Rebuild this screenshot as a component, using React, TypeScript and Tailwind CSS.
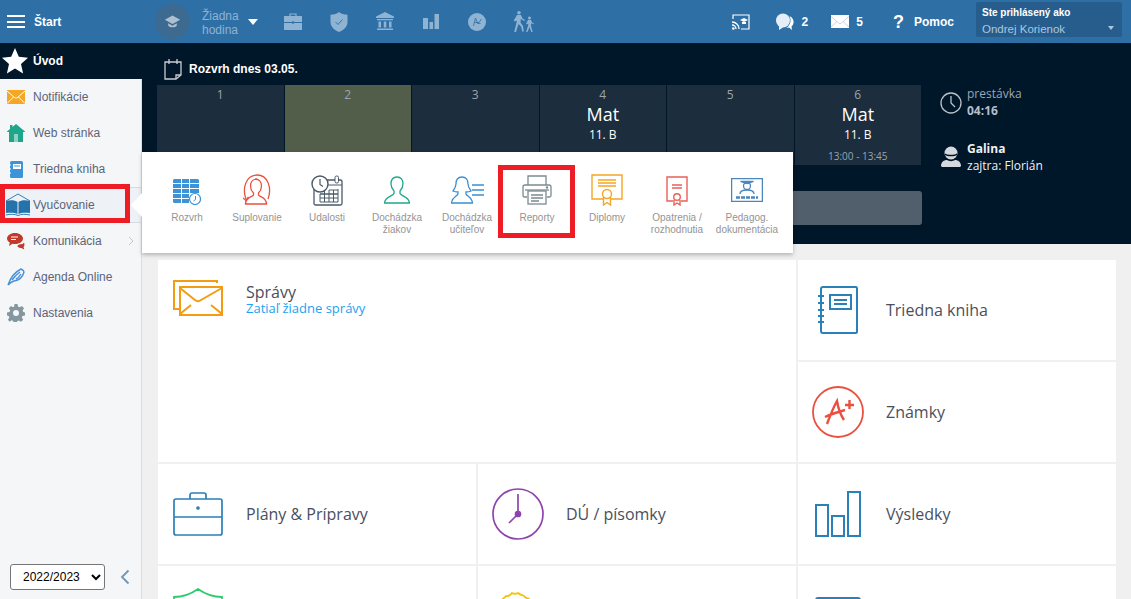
import React from "react";

const S = (p: React.SVGProps<SVGSVGElement>) => <svg fill="none" {...p} />;

const HeaderIcons = {
  Cap: () => (
    <S viewBox="0 0 20 20" className="w-[17px] h-[17px]">
      <path d="M10 3 19 8l-9 5-9-5z" fill="#aebfd0" />
      <path d="M5 12v3c2 2.500 8 2.500 10 0v-3l-5 3z" fill="#aebfd0" />
    </S>
  ),
  Brief: () => (
    <S viewBox="0 0 18 17" className="w-[18px] h-[17px]">
      <path d="M6 3V1h6v2" stroke="#8fb3d3" strokeWidth="1.200" />
      <path d="M0 3h18v6H0zM0 10h18v7H0z" fill="#8fb3d3" />
      <circle cx="9" cy="9.500" r="1.200" fill="#2e6fa6" />
    </S>
  ),
  Shield: () => (
    <S viewBox="0 0 18 20" className="w-[18px] h-[20px]">
      <path d="M9 0c2 1.800 5 2.700 8.500 2.700V10c0 4.500-3.500 8-8.500 10-5-2-8.500-5.500-8.500-10V2.700C4 2.700 7 1.800 9 0z" fill="#8fb3d3" />
      <path d="m5.500 10 2.500 2.500 4.500-5" stroke="#2e6fa6" strokeWidth="0.900" />
    </S>
  ),
  Bank: () => (
    <S viewBox="0 0 18 19" className="w-[18px] h-[19px]">
      <path d="M9 0 18 4.500V6H0V4.500zM1 7h16v1.300H1zM2.500 9.500h2.500v6H2.500zM7.800 9.500h2.500v6H7.800zM13 9.500h2.500v6H13zM1 16.500h16V18H1z" fill="#8fb3d3" />
    </S>
  ),
  Bars: () => (
    <S viewBox="0 0 16 15" className="w-[16px] h-[15px]">
      <path d="M0 4h5v11H0zM6.500 8h3.500v7H6.500zM11.500 0H16v15h-4.500z" fill="#8fb3d3" />
    </S>
  ),
  Ball: () => (
    <S viewBox="0 0 18 18" className="w-[18px] h-[18px]">
      <circle cx="9" cy="9" r="9" fill="#8fb3d3" />
      <path d="M5.500 13 7.500 5l2.500 6 3.500-5M6.500 9l6 1.500" stroke="#2e6fa6" strokeWidth="0.800" />
    </S>
  ),
  Hike: () => (
    <S viewBox="0 0 21 21" className="w-[21px] h-[21px]" fill="#8fb3d3">
      <circle cx="6" cy="1.800" r="1.800" />
      <path d="M4 4h4l1.500 3.500 2.500 1.500-.5 1-3-1.500-.6-1-.4 4 2.500 3.500.8 5.500h-1.600l-1-4.800L5.500 13l-2.500 8H1.200L3.800 10.500l-.3-1L2 10.500 0.700 9.500z" />
      <circle cx="16.500" cy="7" r="1.500" />
      <path d="M15 9h3l1 2.500 2 1-.4.8-2.300-1-.4 2.200 1.800 6.500h-1.400l-1.800-5-2 5h-1.400l2.200-7-.1-1.500-1.400 1-.7-.8z" />
    </S>
  ),
};

const Star = () => (
  <S viewBox="0 0 26 26" className="w-[26px] h-[26px]">
    <path d="M13 0l3.800 8.800 9.200.9-7 6.200 2.100 9.500L13 20.500 4.900 25.400 7 15.900 0 9.700l9.200-.9z" fill="#fff" />
  </S>
);

const sideIcons: Record<string, React.ReactNode> = {
  mail: (
    <S viewBox="0 0 18 14" className="w-[18px] h-[14px]">
      <rect width="18" height="14" fill="#f5a623" />
      <path d="M0 1l7.500 6.500c1 .8 2 .8 3 0L18 1M0 13.500l6.500-6.500M18 13.500 11.500 7" stroke="#fff" strokeWidth="1" />
    </S>
  ),
  home: (
    <S viewBox="0 0 18 18" className="w-[18px] h-[18px]">
      <path d="M9 0 18 7.500V8h-2v10H2V8H0v-.5L3 5V1h2.500v2z" fill="#1fa589" />
      <rect x="7" y="10" width="4" height="8" fill="#fff" opacity=".5" />
    </S>
  ),
  book: (
    <S viewBox="0 0 14 17" className="w-[14px] h-[17px]">
      <rect x="1" width="13" height="17" rx="1.500" fill="#3c93d8" />
      <rect x="4" y="3" width="8" height="5" fill="#fff" />
      <path d="M5 5h6" stroke="#3c93d8" />
      <path d="M0 4h2M0 8h2M0 12h2" stroke="#fff" />
    </S>
  ),
  openbook: (
    <S viewBox="0 0 26 26" className="w-[26px] h-[26px]">
      <path d="M1 9 13 2l12 7" stroke="#2e80bd" strokeWidth="1" />
      <path d="M1 9c4-1 9-1 11.500 1v12C10 20.500 5 20.500 1 21zM25 9c-4-1-9-1-11.500 1v12c2.500-1.500 7.500-1.500 11.500-1z" fill="#2473ab" />
      <path d="M1 23c4-1 9-1 12 .5 3-1.500 8-1.500 12-.5" stroke="#2e80bd" strokeWidth="1" />
    </S>
  ),
  chat: (
    <S viewBox="0 0 18 17" className="w-[18px] h-[17px]">
      <path d="M8 0c4.500 0 8 2.500 8 5.500S12.500 11 8 11c-1 0-1.700 0-2.500-.3L2 13l.8-3.500C1 8.500 0 7 0 5.500 0 2.500 3.500 0 8 0z" fill="#c0392b" />
      <path d="M4 4h7M4 6.500h5" stroke="#fff" />
      <path d="M12 11.500c3 0 4.500-1 5-2 .8 2 .5 3.500-.5 4.500l.8 2.500-3-1.500c-1.500 0-3.300-.5-4-2z" fill="#c0392b" />
    </S>
  ),
  pen: (
    <S viewBox="0 0 18 18" className="w-[18px] h-[18px]" stroke="#4a90d9" strokeWidth="1.400">
      <path d="M1 17C3 11 6 5 14 1c2 1 3 2 3 3-1 4-4 8-10 9-2 .4-4 2-6 4z" />
      <path d="M5 12c2-3 4-5 8-8M9 11c2-1 3.500-2.500 5-5" />
    </S>
  ),
  gear: (
    <S viewBox="0 0 18 18" className="w-[18px] h-[18px]">
      <path d="M7.500 0h3l.5 2.500 1.600.7L14.800 2 17 4.200l-1.400 2.200.7 1.600 1.700.5v3l-2.500.5-.7 1.600 1.400 2.200-2.200 2-2.200-1.300-1.600.7-.5 2.300h-3l-.5-2.500-1.600-.7-2.200 1.400L1 15.600l1.400-2.200L1.700 12 0 11.500v-3L2.500 8l.7-1.600L1.800 4.200 4 2l2.200 1.300 1-.7z" fill="#84969f" />
      <circle cx="9" cy="9" r="3" fill="#f5f6f8" />
    </S>
  ),
};

const sideItems = [
  { k: "mail", t: "Notifikácie" },
  { k: "home", t: "Web stránka" },
  { k: "book", t: "Triedna kniha" },
  { k: "openbook", t: "Vyučovanie", active: true },
  { k: "chat", t: "Komunikácia", arrow: true },
  { k: "pen", t: "Agenda Online" },
  { k: "gear", t: "Nastavenia" },
];

const popIcons = {
  rozvrh: (
    <S viewBox="0 0 28 26" className="w-[28px] h-[26px] mt-[4px]">
      <path d="M0 1.500A1.500 1.500 0 0 1 1.500 0H8v4H0zM9 0h7v4H9zM17 0h7.500A1.500 1.500 0 0 1 26 1.500V4h-9zM0 5h8v4H0zM9 5h7v4H9zM17 5h9v4h-9zM0 10h8v4H0zM9 10h7v4H9zM17 10h9v4h-9zM0 15h8v4H0zM9 15h7v4H9zM0 20h8v4H1.500A1.500 1.500 0 0 1 0 22.500zM9 20h7v4H9z" fill="#3c93d8" />
      <circle cx="22" cy="20" r="5.500" fill="#fff" stroke="#3c93d8" strokeWidth="1.200" />
      <path d="M22.500 17v3.500l-2 1.500" stroke="#3c93d8" />
    </S>
  ),
  supl: (
    <S viewBox="0 0 28 32" className="w-[28px] h-[32px]" stroke="#e9503f" strokeWidth="1.300">
      <path d="M3 25C-1 14 3 1 14 1s15 13 11 24" />
      <path d="M14 5c-4 0-6.500 3-6.500 7 0 3 1.500 5.500 3 7v2c-1 2-8 2-8 9h21c0-7-7-7-8-9v-2c1.500-1.500 3-4 3-7 0-4-2.500-7-6.500-7z" fill="#fff" />
      <path d="M0 24l3 2.500L5.500 23" />
    </S>
  ),
  udal: (
    <S viewBox="0 0 32 31" className="w-[32px] h-[31px]">
      <rect x="3" y="5" width="28" height="25" rx="1.500" fill="#fff" stroke="#4b5a6b" strokeWidth="1.300" />
      <path d="M3 10h28" stroke="#4b5a6b" />
      <rect x="24" y="1" width="3.500" height="7" rx="1.500" fill="#fff" stroke="#4b5a6b" />
      <path d="M9 27v-8h18v-5M9 19h18v8H9M13.500 15v12M18 15v12M22.500 15v12M9 23h18M18 15h9" stroke="#4b5a6b" />
      <circle cx="9" cy="9" r="8" fill="#fff" stroke="#4b5a6b" strokeWidth="1.400" />
      <path d="M9 4v5.500l3 2" stroke="#4b5a6b" strokeWidth="1.200" />
    </S>
  ),
  dz: (
    <S viewBox="0 0 26 28" className="w-[26px] h-[28px]" stroke="#1ea88a" strokeWidth="1.300">
      <path d="M13 1c-4 0-6 3-6 7 0 3 1.200 5 3 7v2.500c-1 2.500-9 3-9.500 9.500h25c-.5-6.500-8.500-7-9.500-9.500V15c1.800-2 3-4 3-7 0-4-2-7-6-7z" />
    </S>
  ),
  du: (
    <S viewBox="0 0 33 28" className="w-[33px] h-[28px]" stroke="#3c8fd0" strokeWidth="1.300">
      <path d="M11 1c-4 0-6 3-6 7 0 2.500-1.500 5-3 7 1 .5 3 1 5 1v2c-1 2.500-6 3-6.500 9h21c-.5-6-5.500-6.500-6.500-9v-2c2 0 4-.5 5-1-1.500-2-3-4.500-3-7 0-4-2-7-6-7z" />
      <path d="M21 9h12M21 14h12M21 19h12" />
    </S>
  ),
  print: (
    <S viewBox="0 0 30 30" className="w-[30px] h-[30px]" stroke="#7c8a91" strokeWidth="1.300">
      <path d="M6 10V1h18v9" />
      <path d="M5 22H2.500A1.500 1.500 0 0 1 1 20.500V12a2 2 0 0 1 2-2h24a2 2 0 0 1 2 2v8.500a1.500 1.500 0 0 1-1.500 1.500H25" />
      <rect x="6" y="16" width="18" height="13" fill="#fff" />
      <path d="M9 20h12M9 23h12M9 26h8" />
      <path d="M3 15h24" />
      <circle cx="25" cy="12.500" r=".6" fill="#7c8a91" />
    </S>
  ),
  dipl: (
    <S viewBox="0 0 32 32" className="w-[32px] h-[32px]" stroke="#f5a623" strokeWidth="1.400">
      <path d="M12 25H1V1h30v24H20" />
      <path d="M7 6h18M7 9h18M7 12h18" />
      <circle cx="16" cy="20" r="4.500" />
      <path d="M12.500 23v8l3.500-2.500 3.500 2.500v-8" />
    </S>
  ),
  opat: (
    <S viewBox="0 0 22 30" className="w-[22px] h-[30px] mt-[2px]" stroke="#e9605a" strokeWidth="1.400">
      <path d="M7 25H1V1h20v24h-6" />
      <path d="M6 9h10M6 12h10" />
      <circle cx="11" cy="21" r="3.300" />
      <path d="M8 24v5l3-2 3 2v-5" />
    </S>
  ),
  ped: (
    <S viewBox="0 0 32 24" className="w-[32px] h-[24px]" stroke="#4b86bd" strokeWidth="1.300">
      <rect x=".6" y=".6" width="30.800" height="22.800" />
      <path d="M9.500 3.500h13L16 5.500z" fill="#4b86bd" />
      <circle cx="16" cy="8" r="3.500" />
      <path d="M9 16c0-3 4-4 7-4s7 1 7 4" />
      <path d="M5 19.500h22" strokeWidth="2.600" strokeDasharray="4 1" />
    </S>
  ),
};

const popup: { i: React.ReactNode; t: string[]; red?: boolean }[] = [
  { i: popIcons.rozvrh, t: ["Rozvrh"] },
  { i: popIcons.supl, t: ["Suplovanie"] },
  { i: popIcons.udal, t: ["Udalosti"] },
  { i: popIcons.dz, t: ["Dochádzka", "žiakov"] },
  { i: popIcons.du, t: ["Dochádzka", "učiteľov"] },
  { i: popIcons.print, t: ["Reporty"], red: true },
  { i: popIcons.dipl, t: ["Diplomy"] },
  { i: popIcons.opat, t: ["Opatrenia /", "rozhodnutia"] },
  { i: popIcons.ped, t: ["Pedagog.", "dokumentácia"] },
];

const cells = [
  { n: "1" },
  { n: "2", cur: true },
  { n: "3" },
  { n: "4", s: "Mat", c: "11. B" },
  { n: "5" },
  { n: "6", s: "Mat", c: "11. B", time: "13:00 - 13:45" },
];

const B = "#2a80b9";
const Card = ({ icon, title }: { icon: React.ReactNode; title: string }) => (
  <div className="bg-white flex items-center h-[100px]">
    <div className="ml-[8px] w-[64px] mr-[16px] shrink-0 flex justify-center">{icon}</div>
    <span className="text-[16px] text-[#4a4f5c] font-['Open_Sans',sans-serif]">{title}</span>
  </div>
);

export default function App() {
  return (
    <div className="relative w-full h-[599px] overflow-hidden bg-[#f0f0f0] flex flex-col font-['Liberation_Sans',Arial,sans-serif]">
      {/* header */}
      <header className="h-[43px] shrink-0 bg-[#2e6fa6] flex items-center text-white">
        <div className="w-[18px] ml-[7px] flex flex-col gap-[3.500px]">
          <div className="h-[2px] bg-white" />
          <div className="h-[2px] bg-white" />
          <div className="h-[2px] bg-white" />
        </div>
        <span className="ml-[9px] w-[121px] text-[12px] font-bold">Štart</span>
        <div className="w-[35px] h-[35px] rounded-full bg-[#3d6a90] flex items-center justify-center">
          <HeaderIcons.Cap />
        </div>
        <div className="ml-[12px] w-[46px] text-[12px] leading-[14px] text-[#8fb3d3] mt-[3px]">
          Žiadna
          <br />
          hodina
        </div>
        <div className="w-0 h-0 border-x-[5px] border-x-transparent border-t-[6px] border-t-white mr-[26px]" />
        <div className="flex items-center">
          <div className="w-[46px]"><HeaderIcons.Brief /></div>
          <div className="w-[46px]"><HeaderIcons.Shield /></div>
          <div className="w-[47px]"><HeaderIcons.Bank /></div>
          <div className="w-[45px]"><HeaderIcons.Bars /></div>
          <div className="w-[45px]"><HeaderIcons.Ball /></div>
          <div><HeaderIcons.Hike /></div>
        </div>
        <div className="ml-auto flex items-center font-bold text-[12px]">
          <S viewBox="0 0 18 16" className="w-[18px] h-[16px]">
            <path d="M1 5V1h16v14H9" stroke="#fff" strokeWidth="1.200" />
            <path d="M0 8a7 7 0 0 1 7 7M0 11a4 4 0 0 1 4 4" stroke="#fff" strokeWidth="1.300" />
            <circle cx="1.300" cy="14.500" r="1.300" fill="#fff" />
            <path d="M9 6l4-2 4 2-4 2zM11 8v2h4V8" fill="#fff" transform="translate(-1 0)" />
          </S>
          <S viewBox="0 0 18 18" className="ml-[26px] w-[18px] h-[18px]">
            <ellipse cx="7" cy="7.500" rx="7" ry="7" fill="#e4eef6" />
            <path d="M13.500 3c3 1.500 4.500 4 4 7-.2 1.500-1 2.500-2 3.500l.5 3.500-3-2.500-3 .5c2.500-1 4-4 4.500-6.500.2-2-.2-4-1-5.500z" fill="#fff" />
            <path d="M3 12v5l4-2.500z" fill="#e4eef6" />
          </S>
          <span className="ml-[8px]">2</span>
          <S viewBox="0 0 18 13" className="ml-[23px] w-[18px] h-[13px]">
            <rect width="18" height="13" fill="#fff" />
            <path d="M0 1.500 7.500 8c1 .8 2 .8 3 0L18 1.500M0 12l6-5.500M18 12l-6-5.500" stroke="#b5cadb" strokeWidth=".8" />
          </S>
          <span className="ml-[7px]">5</span>
          <span className="ml-[30px] text-[18px] leading-none">?</span>
          <span className="ml-[10px]">Pomoc</span>
          <div className="ml-[22px] mr-[9px] w-[146px] h-[35px] -mt-[4px] mb-0 bg-[#275d8d] rounded-[2px] pl-[6px] pt-[4px] relative">
            <div className="text-[10px] leading-[14px]">Ste prihlásený ako</div>
            <div className="text-[11.500px] leading-[14px] font-normal text-[#a9c7e0] mt-[2px]">Ondrej Korienok</div>
            <div className="absolute right-[8px] top-[24px] w-0 h-0 border-x-[3.500px] border-x-transparent border-t-[4px] border-t-[#a9c7e0]" />
          </div>
        </div>
      </header>

      <div className="flex flex-1 min-h-0">
        {/* sidebar */}
        <aside className="w-[142px] shrink-0 flex flex-col bg-[#f5f6f8] border-r border-r-[#d9dce0]">
          <div className="h-[36px] shrink-0 bg-[#001629] flex items-center pl-[2px] text-white -mr-px">
            <Star />
            <span className="ml-[5px] text-[12px] font-bold">Úvod</span>
          </div>
          {sideItems.map((it) => (
            <div
              key={it.t}
              className={`relative h-[36px] shrink-0 flex items-center text-[12px] text-[#5b6478] ${
                it.active ? "bg-[#eef1f6] border-y border-y-[#d5dbe3]" : ""
              }`}
            >
              <div className={`absolute flex justify-center w-[26px] ${it.active ? "left-[5px]" : "left-[3px]"}`}>{sideIcons[it.k]}</div>
              <span className="ml-[33px]">{it.t}</span>
              {it.arrow && (
                <S viewBox="0 0 6 10" className="absolute right-[7px] w-[6px] h-[10px]">
                  <path d="M1 1l4 4-4 4" stroke="#c4c9d0" strokeWidth="1" />
                </S>
              )}
              {it.active && <div className="absolute left-0 top-[-4px] w-[130px] h-[39px] border-[5px] border-[#ee1c25]" />}
            </div>
          ))}
          <div className="mt-auto mb-[9px] flex items-center pl-[10px]">
            <select
              defaultValue="2022/2023"
              className="w-[95px] h-[26px] bg-white border border-[#767676] rounded-[3px] text-[12px] text-black pl-[8px]"
            >
              <option>2022/2023</option>
            </select>
            <S viewBox="0 0 10 16" className="ml-[15px] w-[10px] h-[16px]">
              <path d="M8.500 1.500 2 8l6.500 6.500" stroke="#6e97b8" strokeWidth="1.800" />
            </S>
          </div>
        </aside>

        {/* main */}
        <main className="flex-1 min-w-0 flex flex-col">
          <section className="h-[201px] shrink-0 bg-[#001629] pl-[15px] text-white">
            <div className="h-[42px] flex items-start pt-[15px] pl-[7px]">
              <S viewBox="0 0 18 22" className="w-[18px] h-[22px]">
                <path d="M1 4h16v13l-5 4H1z" stroke="#c8cdd2" strokeWidth="1.300" />
                <path d="M5 1v5M13 1v5" stroke="#c8cdd2" strokeWidth="1.300" />
                <path d="M12 21v-4h5" stroke="#c8cdd2" strokeWidth="1.300" />
              </S>
              <span className="ml-[7px] text-[12px] font-bold leading-[20px] mt-[1px]">Rozvrh dnes 03.05.</span>
            </div>
            <div className="flex">
              <div className="w-[764px] shrink-0">
                <div className="grid grid-cols-6 gap-px h-[80px] font-['Open_Sans',sans-serif]">
                  {cells.map((c) => (
                    <div
                      key={c.n}
                      className={`flex flex-col items-center ${c.cur ? "bg-[#525e4a]" : "bg-[#1c2d3e]"}`}
                    >
                      <span className="mt-[1px] text-[12px] leading-[17px] text-[#9aa5af]">{c.n}</span>
                      {c.s && <span className="text-[18px] leading-[24px] -mt-[1px]">{c.s}</span>}
                      {c.c && <span className="text-[12px] leading-[16px] mt-[1px]">{c.c}</span>}
                      {c.time && <span className="text-[10px] leading-[14px] mt-[6px] text-[#9aa5af]">{c.time}</span>}
                    </div>
                  ))}
                </div>
                <div className="mt-[26px] -mr-px h-[34px] bg-[#505f6b] rounded-r-[3px]" />
              </div>
              <div className="ml-[19px] font-['Open_Sans',sans-serif] text-[12px]">
                <div className="flex mt-[1px]">
                  <S viewBox="0 0 22 22" className="w-[22px] h-[22px] mt-[6px]">
                    <circle cx="11" cy="11" r="10" stroke="#b8c2cb" strokeWidth="1.300" />
                    <path d="M11 4v7l4 4" stroke="#b8c2cb" strokeWidth="1.300" />
                  </S>
                  <div className="ml-[5px]">
                    <div className="leading-[16px] text-[#9aa8b3]">prestávka</div>
                    <div className="leading-[17px] font-bold text-[#b3bfc9]">04:16</div>
                  </div>
                </div>
                <div className="flex mt-[21px]">
                  <S viewBox="0 0 22 22" className="w-[22px] h-[22px] mt-[6px]">
                    <circle cx="11" cy="7" r="6.500" fill="#d5d9dd" />
                    <path d="M5 7.500c2 1.800 10 1.800 12 0v1.500c-2 1.800-10 1.800-12 0z" fill="#001629" />
                    <path d="M1 20c0-4 3-6 6-6 2 1.500 6 1.500 8 0 3 0 6 2 6 6l-1 1H2z" fill="#d5d9dd" />
                  </S>
                  <div className="ml-[5px]">
                    <div className="leading-[17px] font-bold text-[#eef1f4]">Galina</div>
                    <div className="leading-[18px] text-[#eef1f4]">zajtra: Florián</div>
                  </div>
                </div>
              </div>
            </div>
          </section>

          <section className="flex-1 pt-[16px] pl-[16px] pr-[15px] overflow-hidden">
            <div className="grid grid-cols-3 gap-[2px]">
              <div className="col-span-2 row-span-2 bg-white flex items-start">
                <div className="ml-[8px] w-[64px] mr-[16px] shrink-0 flex justify-center pt-[20px]">
                  <S viewBox="0 0 50 36" className="w-[50px] h-[36px]" stroke="#f39c12" strokeWidth="2">
                    <path d="M44 3V1H1v28h5" />
                    <rect x="7" y="7" width="42" height="28" />
                    <path d="M7 8l15 12c2 1.600 4 1.600 6 0L49 8M7 34l11-9M49 34l-11-9" />
                  </S>
                </div>
                <div className="pt-[23px] font-['Open_Sans',sans-serif]">
                  <div className="text-[16px] leading-[18px] text-[#4a4f5c]">Správy</div>
                  <div className="text-[13px] leading-[14px] text-[#1ea1f2]">Zatiaľ žiadne správy</div>
                </div>
              </div>
              <Card
                title="Triedna kniha"
                icon={
                  <S viewBox="0 0 40 48" className="w-[40px] h-[48px]" stroke={B} strokeWidth="2">
                    <path d="M3 6V3a2 2 0 0 1 2-2h33a1.500 1.500 0 0 1 1 1.500v43a1.500 1.500 0 0 1-1.500 1.500H5a2 2 0 0 1-2-2v-7" />
                    <path d="M3 6v35" />
                    <path d="M0 10h6M0 17h6M0 24h6M0 30h6M0 36h6" />
                    <rect x="12" y="9" width="21" height="14" />
                    <path d="M16 14h13M16 18h13" />
                  </S>
                }
              />
              <Card
                title="Známky"
                icon={
                  <S viewBox="0 0 52 52" className="w-[52px] h-[52px]" stroke="#e9503f" strokeWidth="1.800">
                    <circle cx="26" cy="26" r="25" />
                    <path d="M15 38c3-8 6-16 10-23 1 6 3 13 7 19M13 31c6-3 13-5 20-7" strokeWidth="2.400" />
                    <path d="M33 19h9M37.500 14v9" strokeWidth="2.400" />
                  </S>
                }
              />
              <Card
                title="Plány & Prípravy"
                icon={
                  <S viewBox="0 0 50 44" className="w-[50px] h-[44px]" stroke={B} strokeWidth="1.700">
                    <rect x="1" y="7" width="48" height="36" rx="2" />
                    <path d="M1 25h48M17 7V3a2 2 0 0 1 2-2h12a2 2 0 0 1 2 2v4" />
                    <circle cx="25" cy="16" r="1" fill={B} />
                  </S>
                }
              />
              <Card
                title="DÚ / písomky"
                icon={
                  <S viewBox="0 0 52 52" className="w-[52px] h-[52px]" stroke="#8e44ad" strokeWidth="1.700">
                    <circle cx="26" cy="26" r="25" />
                    <path d="M26 6v20L17 35" />
                    <circle cx="26" cy="26" r="2.500" fill="#8e44ad" />
                  </S>
                }
              />
              <Card
                title="Výsledky"
                icon={
                  <S viewBox="0 0 46 46" className="w-[46px] h-[46px]" stroke={B} strokeWidth="2">
                    <rect x="1" y="14" width="12" height="31" />
                    <rect x="17" y="25" width="12" height="20" />
                    <rect x="33" y="1" width="12" height="44" />
                  </S>
                }
              />
              <div className="bg-white h-[100px] pl-[15px] pt-[22px]">
                <S viewBox="0 0 50 20" className="w-[50px] h-[20px]" stroke="#2ecc71" strokeWidth="1.800">
                  <path d="M1 19V9c9 0 17-3 24-8 7 5 15 8 24 8v10" />
                </S>
              </div>
              <div className="bg-white h-[100px] pl-[22px] pt-[25px]">
                <S viewBox="0 0 36 12" className="w-[36px] h-[12px]" stroke="#f1c40f" strokeWidth="1.800">
                  <path d="M1 11c1-4 3-3 5-6 3 1 4-1 6-3 2 1 4 1 6 0 2 2 4 2 6 3 2 3 4 2 5 3s2 2 3 3" />
                </S>
              </div>
              <div className="bg-white h-[100px] pl-[17px] pt-[31px]">
                <S viewBox="0 0 46 6" className="w-[46px] h-[6px]" stroke={B} strokeWidth="2">
                  <path d="M1 6V3a2 2 0 0 1 2-2h40a2 2 0 0 1 2 2v3" />
                </S>
              </div>
            </div>
          </section>
        </main>
      </div>

      {/* popup */}
      <div className="absolute left-[142px] top-[152px] w-[651px] h-[101px] bg-white shadow-[0_2px_4px_rgba(0,0,0,0.25)] pl-[10px] flex">
        <div className="absolute -left-[11px] top-[41px] w-0 h-0 border-y-[12px] border-y-transparent border-r-[11px] border-r-white" />
        {popup.map((p) => (
          <div key={p.t.join("")} className="relative w-[70px] shrink-0 flex flex-col items-center text-[10px] leading-[12px] text-[#949494]">
            <div className="h-[36px] mt-[20px] flex items-center justify-center shrink-0">{p.i}</div>
            <div className="mt-[4px] text-center whitespace-nowrap">
              {p.t.map((l) => (
                <div key={l}>{l}</div>
              ))}
            </div>
            {p.red && <div className="absolute left-[-4px] top-[13px] w-[77px] h-[73px] border-[5px] border-[#ee1c25]" />}
          </div>
        ))}
      </div>
    </div>
  );
}
